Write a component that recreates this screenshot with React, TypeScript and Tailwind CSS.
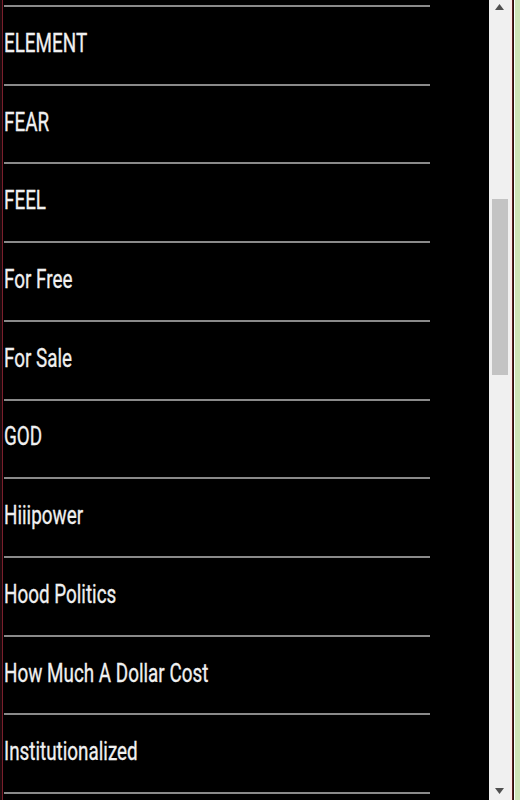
import React from "react";

const songs = [
  "ELEMENT",
  "FEAR",
  "FEEL",
  "For Free",
  "For Sale",
  "GOD",
  "Hiiipower",
  "Hood Politics",
  "How Much A Dollar Cost",
  "Institutionalized",
];

function ScrollArrow({ down }: { down?: boolean }) {
  return (
    <svg width="9" height="6" viewBox="0 0 9 6" className="block">
      {down ? <path d="M0 0H9L4.5 6Z" fill="#505050" /> : <path d="M0 6H9L4.5 0Z" fill="#505050" />}
    </svg>
  );
}

export default function App() {
  return (
    <div className="flex h-[800px] w-[520px] overflow-hidden bg-black">
      {/* left frame edge */}
      <div className="w-[2px] bg-[#1a0a0c]" />
      <div className="w-[1px] bg-[#7a1f2c]" />

      {/* list */}
      <div className="flex-1 bg-black pl-[1px]">
        <div className="w-[426px]">
          <div className="h-[7px] border-b-2 border-[#8a8a8a]" />
          {songs.map((song) => (
            <div
              key={song}
              className="flex h-[78.72px] items-center border-b-2 border-[#8a8a8a] pb-[5px]"
            >
              <span className="origin-left scale-x-[0.725] whitespace-nowrap font-['Roboto',sans-serif] text-[26px] leading-none text-[#f0f0f0] [-webkit-text-stroke:0.3px_#f0f0f0]">
                {song}
              </span>
            </div>
          ))}
        </div>
      </div>

      {/* scrollbar */}
      <div className="flex w-[21px] flex-col items-center bg-[#f0f0f0]">
        <div className="flex h-[12px] items-center justify-center pt-[1px]">
          <ScrollArrow />
        </div>
        <div className="h-[187px]" />
        <div className="h-[176px] w-[16px] bg-[#c3c3c3]" />
        <div className="flex-1" />
        <div className="flex h-[16px] items-center justify-center pb-[2px]">
          <ScrollArrow down />
        </div>
      </div>

      {/* right frame edge */}
      <div className="w-[2px] bg-[#fbeaea]" />
      <div className="w-[1px] bg-[#5a1f1f]" />
      <div className="w-[1px] bg-[#2a1010]" />
      <div className="w-[1px] bg-[#ffffff]" />
      <div className="w-[5px] bg-[#cfe3b8]" />
    </div>
  );
}
